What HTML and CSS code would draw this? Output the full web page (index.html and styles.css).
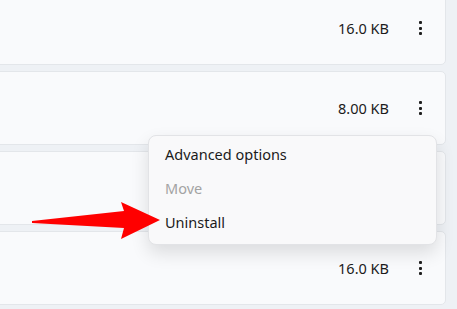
FILE: index.html
```html
<!DOCTYPE html>
<html lang="en">
<head>
    <meta charset="UTF-8">
    <title>Installed apps</title>
    <link rel="stylesheet" href="styles.css">
</head>
<body>
    <div class="app-list">
        <div class="app-row">
            <span class="app-size">16.0 KB</span>
            <button class="more-btn"><span></span><span></span><span></span></button>
        </div>
        <div class="app-row">
            <span class="app-size">8.00 KB</span>
            <button class="more-btn"><span></span><span></span><span></span></button>
        </div>
        <div class="app-row">
            <span class="app-size"></span>
        </div>
        <div class="app-row">
            <span class="app-size">16.0 KB</span>
            <button class="more-btn"><span></span><span></span><span></span></button>
        </div>
    </div>

    <!-- context menu opened from the second row -->
    <div class="menu">
        <div class="menu-item">Advanced options</div>
        <div class="menu-item disabled">Move</div>
        <div class="menu-item">Uninstall</div>
    </div>

    <svg class="arrow" width="170" height="50" viewBox="0 0 170 50">
        <polygon points="32,26 124,16 121,7 160,25 121,44 124,33 32,28" fill="#ff0000"/>
    </svg>
</body>
</html>
```

FILE: styles.css
```css
body {
    margin: 0;
    padding: 0;
    background: #eef1f5;
    font-family: "Segoe UI", "Noto Sans", sans-serif;
    color: #1b1b1b;
    overflow: hidden;
}
.app-list {
    display: flex;
    flex-direction: column;
    gap: 6px;
    margin: -9px 11px 0 -10px;
}
.app-row {
    height: 72px;
    background: #f9fafc;
    border: 1px solid #e3e6ea;
    border-radius: 5px;
    display: flex;
    align-items: center;
    justify-content: flex-end;
    padding-right: 9px;
}
.app-size {
    font-size: 14.5px;
    margin-right: 15px;
}
.more-btn {
    width: 32px;
    height: 32px;
    border: none;
    background: transparent;
    display: flex;
    flex-direction: column;
    align-items: center;
    justify-content: center;
    gap: 2.5px;
    padding: 0;
}
.more-btn span {
    width: 3px;
    height: 3px;
    background: #1f1f1f;
    border-radius: 1px;
}
.menu {
    position: absolute;
    left: 148px;
    top: 135px;
    width: 289px;
    padding: 1px 0 5px;
    box-sizing: border-box;
    background: #f9f9fa;
    border: 1px solid #e2e3e6;
    border-radius: 8px;
    box-shadow: 0 8px 18px rgba(0, 0, 0, 0.12);
}
.menu-item {
    height: 34px;
    line-height: 34px;
    padding-left: 16px;
    font-size: 14.5px;
}
.menu-item.disabled {
    color: #a3a3a3;
}
.arrow {
    position: absolute;
    left: 0;
    top: 195px;
}
```
